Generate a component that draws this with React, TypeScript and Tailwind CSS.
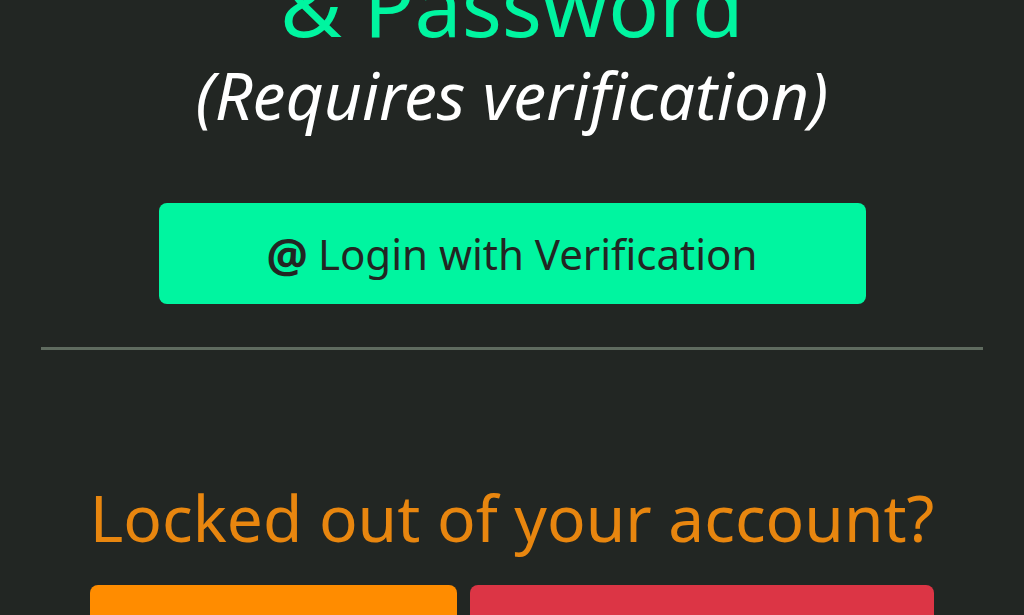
import React from 'react';

const font = { fontFamily: '"Noto Sans", "Open Sans", sans-serif' };

const App: React.FC = () => {
  return (
    <div className="h-[615px] w-full overflow-hidden bg-[#222623]" style={font}>
      <div className="flex flex-col items-center px-[41px]">
        <h1 className="-mt-[45px] text-center text-[84px] leading-[99px] text-[#00f5a0]">
          & Password
        </h1>
        <p className="text-center text-[66px] italic leading-[80px] text-white">
          (Requires verification)
        </p>

        <button
          type="button"
          className="mt-[69px] flex h-[101px] w-[707px] items-center justify-center gap-[10px] rounded-lg bg-[#00f5a0] text-[42px] text-[#222623]"
        >
          <span className="text-[46px] font-bold leading-none">@</span>
          <span>Login with Verification</span>
        </button>

        <hr className="mt-[43px] w-full border-0 border-t-[3px] border-[#5f6b5f]" />

        <h2 className="mt-[128px] text-center text-[64px] leading-[80px] text-[#e8860f]">
          Locked out of your account?
        </h2>

        <div className="mt-[27px] flex gap-[13px]">
          <button type="button" className="h-[60px] w-[367px] rounded-lg bg-[#ff8c00]" />
          <button type="button" className="h-[60px] w-[464px] rounded-lg bg-[#dc3545]" />
        </div>
      </div>
    </div>
  );
};

export default App;
